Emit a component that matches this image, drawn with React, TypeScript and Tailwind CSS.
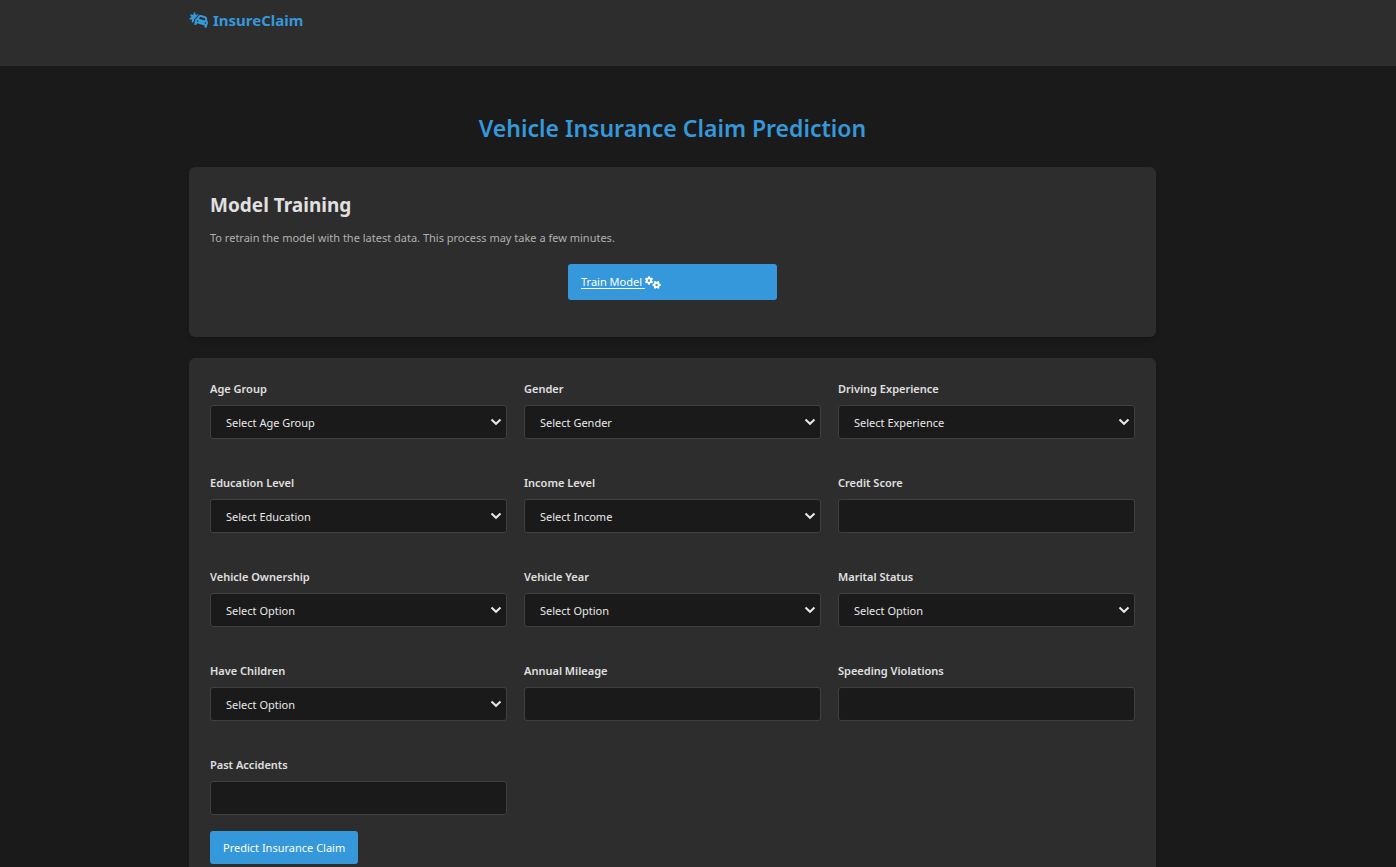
import { FaCarBurst, FaGears } from 'react-icons/fa6';

type Field = { id: string; label: string; placeholder?: string; options?: string[] };

const fields: Field[] = [
  { id: 'age', label: 'Age Group', placeholder: 'Select Age Group', options: ['16-25', '26-39', '40-64', '65+'] },
  { id: 'gender', label: 'Gender', placeholder: 'Select Gender', options: ['Female', 'Male'] },
  { id: 'experience', label: 'Driving Experience', placeholder: 'Select Experience', options: ['0-9y', '10-19y', '20-29y', '30y+'] },
  { id: 'education', label: 'Education Level', placeholder: 'Select Education', options: ['None', 'High School', 'University'] },
  { id: 'income', label: 'Income Level', placeholder: 'Select Income', options: ['Poverty', 'Working Class', 'Middle Class', 'Upper Class'] },
  { id: 'credit', label: 'Credit Score' },
  { id: 'ownership', label: 'Vehicle Ownership', placeholder: 'Select Option', options: ['Yes', 'No'] },
  { id: 'year', label: 'Vehicle Year', placeholder: 'Select Option', options: ['Before 2015', 'After 2015'] },
  { id: 'married', label: 'Marital Status', placeholder: 'Select Option', options: ['Married', 'Single'] },
  { id: 'children', label: 'Have Children', placeholder: 'Select Option', options: ['Yes', 'No'] },
  { id: 'mileage', label: 'Annual Mileage' },
  { id: 'violations', label: 'Speeding Violations' },
  { id: 'accidents', label: 'Past Accidents' },
];

const controlClass =
  'block h-[34px] w-full appearance-none rounded-[3px] border border-[#404040] bg-[#1a1a1a] px-[15px] pt-0.5 text-[11px] text-[#e8e8e8] outline-none focus:border-[#3498db]';

function FormField({ id, label, placeholder, options }: Field) {
  return (
    <div>
      <label htmlFor={id} className="mb-1.5 block text-[11px] leading-5 font-semibold text-[#e0e0e0]">
        {label}
      </label>
      {options ? (
        <div className="relative">
          <select id={id} name={id} defaultValue="" className={controlClass}>
            <option value="">{placeholder}</option>
            {options.map((option) => (
              <option key={option} value={option}>
                {option}
              </option>
            ))}
          </select>
          <svg
            viewBox="0 0 12 8"
            aria-hidden="true"
            className="pointer-events-none absolute top-[13px] right-[5px] h-2 w-3 text-[#e8e8e8]"
          >
            <path d="M1.5 1.5 L6 5.8 L10.5 1.5" fill="none" stroke="currentColor" strokeWidth="2" />
          </svg>
        </div>
      ) : (
        <input id={id} name={id} type="number" className={controlClass} />
      )}
    </div>
  );
}

export default function App() {
  return (
    <div className="min-h-screen bg-[#1a1a1a] font-['Noto_Sans',sans-serif] text-[11px] text-[#e0e0e0]">
      <header className="h-[66px] bg-[#2d2d2d] pr-[51px]">
        <div className="mx-auto max-w-[967px] pt-2">
          <a href="#" className="inline-flex items-center gap-1 text-[15px] leading-6 font-bold text-[#3498db]">
            <FaCarBurst className="h-4 w-5" />
            InsureClaim
          </a>
        </div>
      </header>

      <main className="pr-[51px] pb-5">
        <div className="mx-auto max-w-[967px] pt-[46px]">
          <h1 className="mb-[23px] text-center text-[23px] leading-8 font-semibold text-[#3498db]">
            Vehicle Insurance Claim Prediction
          </h1>

          <section className="mb-[21px] rounded-md bg-[#2d2d2d] px-[21px] pt-6 pb-[37px] shadow-md">
            <h2 className="mb-2 text-[19px] leading-7 font-bold">Model Training</h2>
            <p className="mb-[15px] text-[11px] leading-[22px] text-[#b0b0b0]">
              To retrain the model with the latest data. This process may take a few minutes.
            </p>
            <a
              href="#"
              className="mx-auto flex h-9 w-[209px] items-center rounded-[3px] bg-[#3498db] px-[13px] text-[11px] text-white"
            >
              <span className="whitespace-pre underline underline-offset-2">Train Model </span>
              <FaGears className="h-[13px] w-4" />
            </a>
          </section>

          <form className="rounded-md bg-[#2d2d2d] p-[21px] shadow-md" onSubmit={(e) => e.preventDefault()}>
            <div className="grid grid-cols-3 gap-x-[17px] gap-y-[34px]">
              {fields.map((field) => (
                <FormField key={field.id} {...field} />
              ))}
            </div>
            <button
              type="submit"
              className="mt-4 h-[33px] rounded-[3px] bg-[#3498db] px-[13px] pt-0.5 text-[11px] text-white"
            >
              Predict Insurance Claim
            </button>
          </form>
        </div>
      </main>
    </div>
  );
}
